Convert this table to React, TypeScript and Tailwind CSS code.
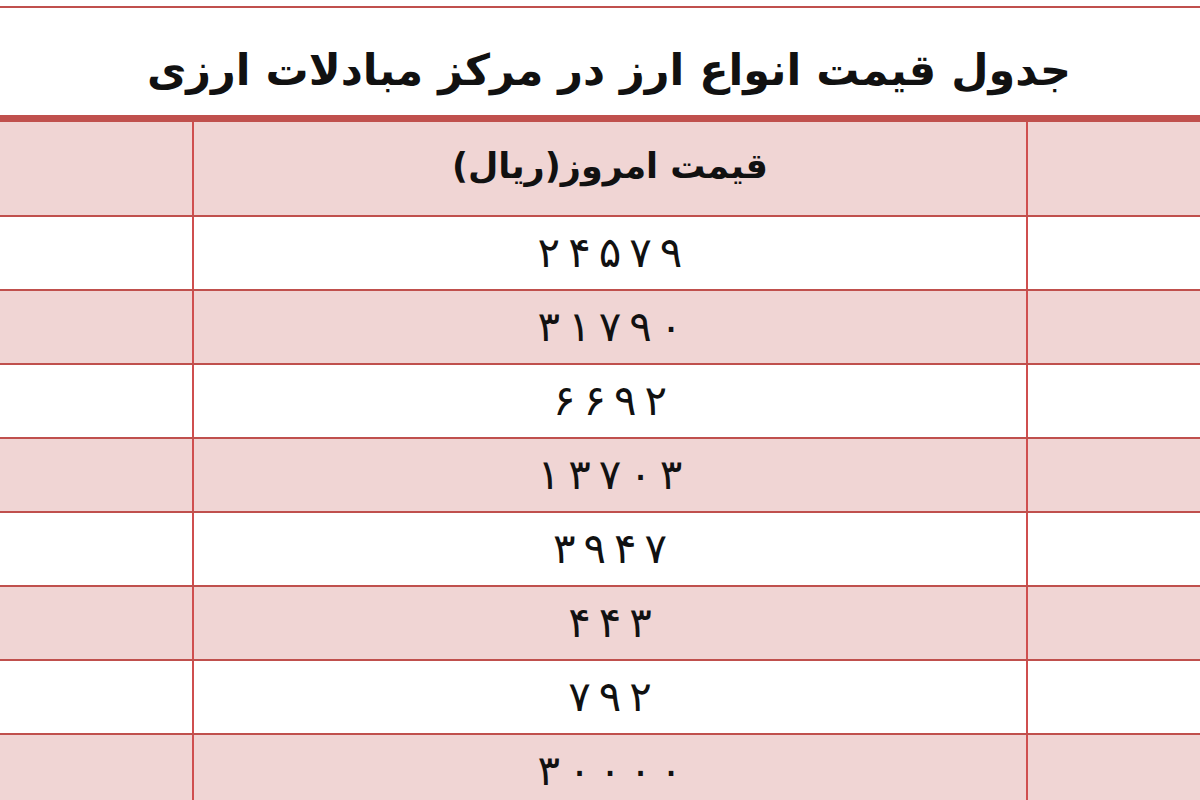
const prices = ["۲۴۵۷۹", "۳۱۷۹۰", "۶۶۹۲", "۱۳۷۰۳", "۳۹۴۷", "۴۴۳", "۷۹۲", "۳۰۰۰۰"];

const font = { fontFamily: '"DejaVu Sans", "Noto Sans", sans-serif' };

function Row({ children, shaded, className = "" }: { children?: React.ReactNode; shaded?: boolean; className?: string }) {
  const bg = shaded ? "bg-[#f0d5d4]" : "bg-white";
  return (
    <div className={`grid grid-cols-[192px_2px_1fr_2px_172px] border-b-2 border-[#c0504d] ${className}`}>
      <div className={bg} />
      <div className="bg-[#cf4f4f]" />
      <div className={`${bg} flex items-center justify-center`}>{children}</div>
      <div className="bg-[#cf4f4f]" />
      <div className={bg} />
    </div>
  );
}

export default function App() {
  return (
    <div dir="ltr" className="h-[800px] w-[1200px] overflow-hidden bg-white text-[#111]" style={font}>
      <div className="mt-[6px] flex h-[109px] items-center justify-center border-t-2 border-[#c0504d] pl-[18px] pt-[18px]">
        <h1 dir="rtl" className="text-[43px] font-bold leading-none">
          جدول قیمت انواع ارز در مرکز مبادلات ارزی
        </h1>
      </div>
      <div className="h-[7px] bg-[#c0504d]" />
      <Row shaded className="h-[95px]">
        <span dir="rtl" className="pb-1 text-[35px] font-bold">
          قیمت امروز(ریال)
        </span>
      </Row>
      {prices.map((p, i) => (
        <Row key={p} shaded={i % 2 === 1} className="h-[74px]">
          <span className="flex gap-[8px] text-[42px] leading-none">
            {p.split("").map((d, j) => (
              <span key={j}>{d}</span>
            ))}
          </span>
        </Row>
      ))}
    </div>
  );
}
